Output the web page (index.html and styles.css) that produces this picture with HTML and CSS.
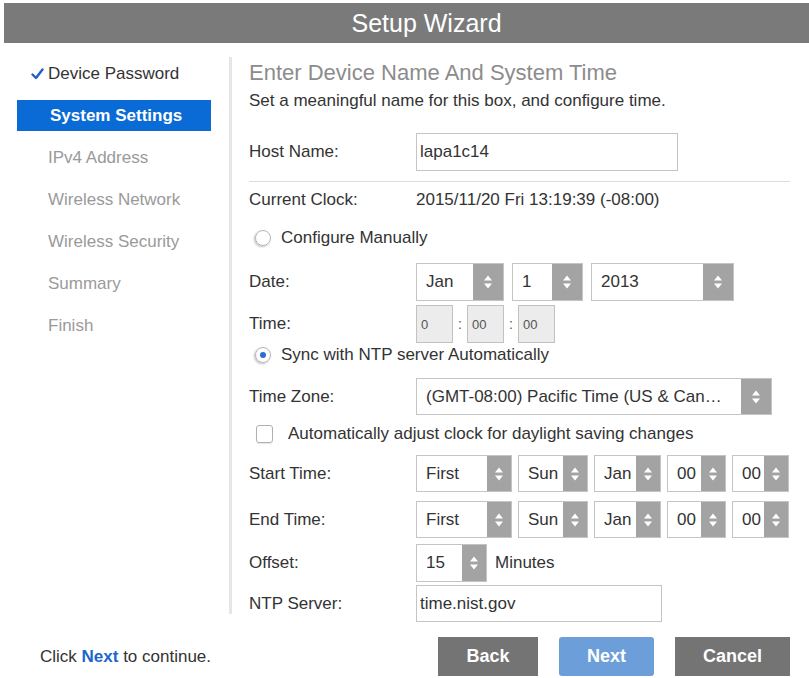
FILE: index.html
```html
<!DOCTYPE html>
<html lang="en">
<head>
    <meta charset="UTF-8">
    <title>Setup Wizard</title>
    <link rel="stylesheet" href="styles.css">
</head>
<body>
    <div class="wizard-header">Setup Wizard</div>

    <div class="wizard-body">
        <ul class="steps">
            <li class="step done">
                <svg class="check" width="13" height="12" viewBox="0 0 13 12"><path d="M1.5 6.5 L5 10 L11.5 1.5" fill="none" stroke="#2360c4" stroke-width="2.4" stroke-linecap="round" stroke-linejoin="round"/></svg>Device Password
            </li>
            <li class="step active">System Settings</li>
            <li class="step">IPv4 Address</li>
            <li class="step">Wireless Network</li>
            <li class="step">Wireless Security</li>
            <li class="step">Summary</li>
            <li class="step">Finish</li>
        </ul>

        <div class="panel">
            <h2 class="panel-title">Enter Device Name And System Time</h2>
            <p class="panel-intro">Set a meaningful name for this box, and configure time.</p>

            <div class="form-row row-host">
                <label class="form-label">Host Name:</label>
                <input class="text-field host-field" type="text" value="lapa1c14">
            </div>

            <div class="separator"></div>

            <div class="text-row row-clock">
                <span class="form-label">Current Clock:</span>
                <span>2015/11/20 Fri 13:19:39 (-08:00)</span>
            </div>

            <div class="text-row row-manual">
                <span class="radio"></span>
                <span class="radio-label">Configure Manually</span>
            </div>

            <div class="form-row row-date">
                <span class="form-label">Date:</span>
                <div class="spin-group">
                    <div class="spin spin-month"><span class="spin-value">Jan</span><span class="spin-arrows"></span></div>
                    <div class="spin spin-day"><span class="spin-value">1</span><span class="spin-arrows"></span></div>
                    <div class="spin spin-year"><span class="spin-value">2013</span><span class="spin-arrows"></span></div>
                </div>
            </div>

            <div class="form-row row-time">
                <span class="form-label">Time:</span>
                <span class="time-box">0</span>
                <span class="colon">:</span>
                <span class="time-box">00</span>
                <span class="colon">:</span>
                <span class="time-box">00</span>
            </div>

            <div class="text-row row-sync">
                <span class="radio checked"></span>
                <span class="radio-label">Sync with NTP server Automatically</span>
            </div>

            <div class="form-row row-zone">
                <span class="form-label">Time Zone:</span>
                <div class="spin spin-zone"><span class="spin-value">(GMT-08:00) Pacific Time (US &amp; Canada)</span><span class="spin-arrows"></span></div>
            </div>

            <div class="text-row row-dst">
                <span class="checkbox"></span>
                <span class="checkbox-label">Automatically adjust clock for daylight saving changes</span>
            </div>

            <div class="form-row row-start">
                <span class="form-label">Start Time:</span>
                <div class="spin-group tight">
                    <div class="spin compact spin-week"><span class="spin-value">First</span><span class="spin-arrows"></span></div>
                    <div class="spin compact spin-wday"><span class="spin-value">Sun</span><span class="spin-arrows"></span></div>
                    <div class="spin compact spin-mon"><span class="spin-value">Jan</span><span class="spin-arrows"></span></div>
                    <div class="spin compact spin-hour"><span class="spin-value">00</span><span class="spin-arrows"></span></div>
                    <div class="spin compact spin-min"><span class="spin-value">00</span><span class="spin-arrows"></span></div>
                </div>
            </div>

            <div class="form-row row-end">
                <span class="form-label">End Time:</span>
                <div class="spin-group tight">
                    <div class="spin compact spin-week"><span class="spin-value">First</span><span class="spin-arrows"></span></div>
                    <div class="spin compact spin-wday"><span class="spin-value">Sun</span><span class="spin-arrows"></span></div>
                    <div class="spin compact spin-mon"><span class="spin-value">Jan</span><span class="spin-arrows"></span></div>
                    <div class="spin compact spin-hour"><span class="spin-value">00</span><span class="spin-arrows"></span></div>
                    <div class="spin compact spin-min"><span class="spin-value">00</span><span class="spin-arrows"></span></div>
                </div>
            </div>

            <div class="form-row row-offset">
                <span class="form-label">Offset:</span>
                <div class="spin compact spin-offset"><span class="spin-value">15</span><span class="spin-arrows"></span></div>
                <span class="unit">Minutes</span>
            </div>

            <div class="form-row row-ntp">
                <label class="form-label">NTP Server:</label>
                <input class="text-field ntp-field" type="text" value="time.nist.gov">
            </div>
        </div>
    </div>

    <div class="wizard-footer">
        <div class="hint">Click <b>Next</b> to continue.</div>
        <div class="actions">
            <button class="btn btn-back">Back</button>
            <button class="btn btn-next">Next</button>
            <button class="btn btn-cancel">Cancel</button>
        </div>
    </div>
</body>
</html>
```

FILE: styles.css
```css
body {
    margin: 0;
    font-family: "Liberation Sans", Arial, sans-serif;
    font-size: 17px;
    color: #333333;
    background-color: #ffffff;
}
.wizard-header {
    margin: 3px 0 0 4px;
    height: 40px;
    padding-left: 40px;
    background-color: #7a7a7a;
    color: #ffffff;
    font-size: 25px;
    line-height: 40px;
    text-align: center;
}
.wizard-body {
    display: flex;
    height: 571px;
}
/* Steps list on the left */
.steps {
    list-style: none;
    margin: 14px 0 0;
    padding: 1px 0 0 17px;
    width: 212px;
    height: 556px;
    border-right: 3px solid #e6e6e6;
    flex: none;
}
.step {
    width: 163px;
    height: 31px;
    line-height: 31px;
    padding-left: 31px;
    margin-bottom: 11px;
    color: #9a9a9a;
}
.step.done {
    color: #333333;
}
.step.active {
    background-color: #0b6bd6;
    color: #ffffff;
    font-weight: bold;
    padding-left: 33px;
    width: 161px;
}
.check {
    margin-left: -17px;
    margin-right: 4px;
    vertical-align: -1px;
}
/* Form panel */
.panel {
    flex: 1;
    padding: 17px 0 0 17px;
}
.panel-title {
    margin: 0;
    font-size: 22px;
    font-weight: normal;
    line-height: 26px;
    color: #8c8c8c;
}
.panel-intro {
    margin: 4px 0 0;
    line-height: 22px;
}
.form-row {
    display: flex;
    align-items: center;
    height: 37px;
}
.text-row {
    display: flex;
    align-items: center;
    height: 22px;
}
.form-label {
    width: 167px;
    flex: none;
}
.row-host { margin-top: 21px; height: 38px; }
.row-clock { margin-top: 7px; }
.row-manual { margin-top: 16px; }
.row-date { margin-top: 14px; height: 38px; }
.row-time { margin-top: 4px; height: 38px; }
.row-sync { margin-top: 1px; }
.row-zone { margin-top: 12px; }
.row-dst { margin-top: 8px; }
.row-start { margin-top: 10px; }
.row-end { margin-top: 9px; }
.row-offset { margin-top: 6px; height: 38px; }
.row-ntp { margin-top: 3px; }
.separator {
    margin: 10px 19px 0 0;
    border-top: 1px solid #dddddd;
}
.text-field {
    box-sizing: border-box;
    height: 100%;
    border: 1px solid #c4c4c4;
    padding: 0 3px;
    font-family: "Liberation Sans", Arial, sans-serif;
    font-size: 17px;
    color: #333333;
    outline: none;
}
.host-field { width: 262px; }
.ntp-field { width: 246px; }
/* Radio and checkbox */
.radio {
    box-sizing: border-box;
    width: 16px;
    height: 16px;
    margin-left: 6px;
    border: 1px solid #b5b5b5;
    border-radius: 50%;
    box-shadow: -1px 1px 2px rgba(0, 0, 0, 0.25);
    display: flex;
    align-items: center;
    justify-content: center;
}
.radio.checked::after {
    content: "";
    width: 6px;
    height: 6px;
    border-radius: 50%;
    background-color: #2b6fd1;
}
.radio-label {
    margin-left: 10px;
}
.checkbox {
    box-sizing: border-box;
    width: 17px;
    height: 18px;
    margin-left: 7px;
    border: 1px solid #b0b0b0;
    border-radius: 3px;
    box-shadow: 0 1px 1px rgba(0, 0, 0, 0.1);
}
.checkbox-label {
    margin-left: 15px;
}
/* Spinner selects */
.spin-group {
    display: flex;
    height: 100%;
    gap: 8px;
}
.spin-group.tight {
    gap: 6px;
}
.spin {
    box-sizing: border-box;
    display: flex;
    height: 100%;
    border: 1px solid #c4c4c4;
    background-color: #ffffff;
}
.spin-value {
    flex: 1;
    min-width: 0;
    padding-left: 9px;
    display: flex;
    align-items: center;
    white-space: nowrap;
    overflow: hidden;
}
.spin-arrows {
    width: 30px;
    flex: none;
    background-color: #a3a3a3;
    background-image: url("data:image/svg+xml,%3Csvg xmlns='http://www.w3.org/2000/svg' width='10' height='16' viewBox='0 0 10 16'%3E%3Cpath d='M1 6.5 L5 1.5 L9 6.5 Z M1 9.5 L5 14.5 L9 9.5 Z' fill='%23ffffff'/%3E%3C/svg%3E");
    background-repeat: no-repeat;
    background-position: center;
}
.spin.compact .spin-arrows {
    width: 24px;
}
.spin-month { width: 88px; }
.spin-day { width: 71px; }
.spin-year { width: 143px; }
.spin-zone { width: 356px; }
.spin-zone .spin-value {
    display: block;
    line-height: 35px;
    padding-right: 10px;
    text-overflow: ellipsis;
}
.spin-week { width: 96px; }
.spin-wday { width: 70px; }
.spin-mon { width: 67px; }
.spin-hour { width: 59px; }
.spin-min { width: 57px; }
.spin-offset { width: 71px; }
.unit {
    margin-left: 8px;
}
.time-box {
    box-sizing: border-box;
    width: 37px;
    height: 100%;
    padding-left: 4px;
    display: flex;
    align-items: center;
    border: 1px solid #c2c2c2;
    background-color: #ececec;
    font-size: 13px;
    color: #555555;
}
.colon {
    width: 14px;
    text-align: center;
    font-size: 14px;
    color: #555555;
}
/* Footer */
.wizard-footer {
    display: flex;
    align-items: center;
    margin-top: 23px;
    padding: 0 19px 0 40px;
}
.hint b {
    color: #1a66cc;
}
.actions {
    margin-left: auto;
    display: flex;
    gap: 21px;
}
.btn {
    height: 39px;
    border: none;
    color: #ffffff;
    font-family: "Liberation Sans", Arial, sans-serif;
    font-size: 18px;
    font-weight: bold;
    cursor: pointer;
}
.btn-back {
    width: 100px;
    background-color: #747474;
}
.btn-next {
    width: 95px;
    background-color: #6c9fda;
    border-radius: 3px;
}
.btn-cancel {
    width: 115px;
    background-color: #747474;
}
```
